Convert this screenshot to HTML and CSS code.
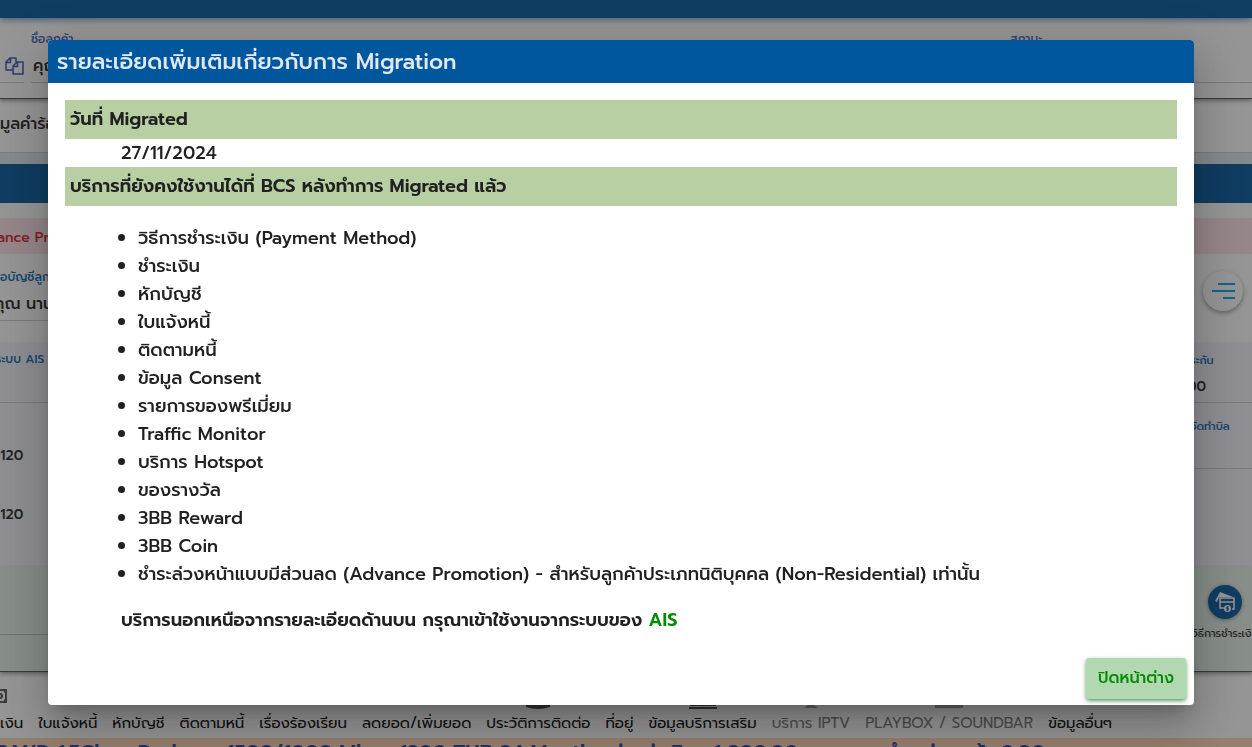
FILE: index.html
```html
<!DOCTYPE html>
<html lang="th">
<head>
<meta charset="utf-8">
<title>รายละเอียดเพิ่มเติมเกี่ยวกับการ Migration</title>
<link rel="stylesheet" href="styles.css">
</head>
<body>
<div class="page">
  <header class="topbar"></header>
  <section class="customer">
    <div class="customer-copy">
      <svg width="19" height="18" viewBox="0 0 19 18" fill="none" stroke="#3f51b5" stroke-width="1.5" stroke-linejoin="round"><path d="M8 13H1V5l4-4h6v4M1 5.500h4.500V1M8 17V9l4-4h6v12zM8 9.500h4.500V5"/></svg>
    </div>
    <div class="customer-name">
      <span class="label violet">ชื่อลูกค้า</span>
      <span class="value">คุณ</span>
    </div>
    <div class="customer-status">
      <span class="label violet">สถานะ</span>
    </div>
  </section>
  <section class="request">มูลคำร้อง</section>
  <div class="section-bar"></div>
  <div class="notice">ance Promotion</div>
  <section class="account">
    <div class="account-name">
      <span class="label">อบัญชีลูกค้า</span>
      <span class="value">คุณ นาน</span>
    </div>
    <button class="round-menu" aria-label="เมนู">
      <svg width="24" height="18" viewBox="0 0 24 18" stroke="#00a3e8" stroke-width="2"><path d="M6 2h17M0 9h23M11 16h12"/></svg>
    </button>
  </section>
  <section class="billing">
    <div class="billing-main">
      <span class="label system">ระบบ AIS</span>
      <span class="amount">1120</span>
      <span class="amount">1120</span>
    </div>
    <div class="billing-side">
      <div class="side-field"><span class="label small">ระกัน</span><span class="amount">00</span></div>
      <div class="side-field"><span class="label small">จัดทำบิล</span></div>
    </div>
  </section>
  <section class="payment">
    <div class="payment-item">
      <span class="payment-icon">
        <svg width="22" height="22" viewBox="0 0 22 22"><path d="M1 10 6 1l13 5H5L3 11z" fill="#fff"/><path d="M11 17H6V7h14v11h-2M6 11h14" fill="none" stroke="#fff" stroke-width="1.5"/><circle cx="13.500" cy="17.500" r="3.500" fill="#fff"/><path d="M15 16h-2.500v1.500h2V19H12M13.500 15.200v4.600" fill="none" stroke="#00579d" stroke-width=".8"/></svg>
      </span>
      <span class="payment-label">วิธีการชำระเงิน</span>
    </div>
  </section>
  <nav class="tabs">
    <a class="tab first" href="#"><svg width="8" height="14" viewBox="0 0 8 14" fill="none" stroke="#555" stroke-width="2"><path d="M0 1h6v12H0M0 5a2 2 0 0 1 0 4M4 1l2 3M4 13l2-3"/></svg>เงิน</a>
    <a class="tab" href="#">ใบแจ้งหนี้</a>
    <a class="tab" href="#">หักบัญชี</a>
    <a class="tab" href="#">ติดตามหนี้</a>
    <a class="tab" href="#">เรื่องร้องเรียน</a>
    <a class="tab" href="#">ลดยอด/เพิ่มยอด</a>
    <a class="tab" href="#"><svg width="24" height="24" viewBox="0 0 24 24" fill="#444"><ellipse cx="12" cy="4" rx="12" ry="4"/><path d="M0 7q12 6 24 0v15q-12 4-24 0z"/></svg>ประวัติการติดต่อ</a>
    <a class="tab" href="#">ที่อยู่</a>
    <a class="tab" href="#"><svg width="28" height="24" viewBox="0 0 28 24" fill="none" stroke="#444" stroke-width="2"><path d="M2 4h24v16H2zM0 23h28M9 15l5 5 5-5"/></svg>ข้อมูลบริการเสริม</a>
    <a class="tab off" href="#"><svg width="14" height="24" viewBox="0 0 14 24" fill="#444"><path d="M4 4h6v16l4 3H0l4-3z"/></svg>บริการ IPTV</a>
    <a class="tab off" href="#"><svg width="28" height="24" viewBox="0 0 28 24" fill="#444"><path d="M0 4h28v19H0z"/></svg>PLAYBOX / SOUNDBAR</a>
    <a class="tab" href="#">ข้อมูลอื่นๆ</a>
  </nav>
  <div class="package">BAND 1.5Gbps Package 1500/1000 Mbps 1200 THB 24 Months ต่อ ค่า Fee 1,800.00 บาท ยอดชำระล่วงหน้า 0.00</div>
</div>

<div class="backdrop">
  <div class="dialog" role="dialog" aria-labelledby="dialog-title">
    <h1 class="dialog-title" id="dialog-title">รายละเอียดเพิ่มเติมเกี่ยวกับการ Migration</h1>
    <div class="dialog-body">
      <h2 class="band">วันที่ Migrated</h2>
      <p class="date">27/11/2024</p>
      <h2 class="band">บริการที่ยังคงใช้งานได้ที่ BCS หลังทำการ Migrated แล้ว</h2>
      <ul class="services">
        <li>วิธีการชำระเงิน (Payment Method)</li>
        <li>ชำระเงิน</li>
        <li>หักบัญชี</li>
        <li>ใบแจ้งหนี้</li>
        <li>ติดตามหนี้</li>
        <li>ข้อมูล Consent</li>
        <li>รายการของพรีเมี่ยม</li>
        <li>Traffic Monitor</li>
        <li>บริการ Hotspot</li>
        <li>ของรางวัล</li>
        <li>3BB Reward</li>
        <li>3BB Coin</li>
        <li>ชำระล่วงหน้าแบบมีส่วนลด (Advance Promotion) - สำหรับลูกค้าประเภทนิติบุคคล (Non-Residential) เท่านั้น</li>
      </ul>
      <p class="remark">บริการนอกเหนือจากรายละเอียดด้านบน กรุณาเข้าใช้งานจากระบบของ <span class="ais">AIS</span></p>
    </div>
    <div class="dialog-actions"><button class="close">ปิดหน้าต่าง</button></div>
  </div>
</div>
</body>
</html>
```
FILE: styles.css
```css
* { box-sizing: border-box; }
body {
  margin: 0;
  height: 100vh;
  overflow: hidden;
  font-family: Prompt, Inter, "Noto Sans Thai", "Noto Sans", sans-serif;
  font-size: 18px;
  font-weight: 500;
  line-height: 28px;
  color: #212121;
}
.page { height: 100vh; overflow: hidden; background: #fff; white-space: nowrap; }
.topbar { height: 18px; background: #00579d; box-shadow: 0 2px 6px #00579d99; position: relative; }
.label { display: block; font-size: 12px; line-height: 20px; color: #0868b0; }
.label.violet { color: #3f5fc0; }
.label.small { font-size: 11px; }
.value { display: block; font-size: 16px; line-height: 24px; }
.customer {
  display: grid;
  grid-template-columns: 24px 1fr 242px;
  column-gap: 7px;
  height: 81px;
  padding: 11px 0 15px;
  border-bottom: 1px solid #555;
  box-shadow: 0 2px 4px #0006;
}
.customer > div { border-bottom: 1px solid #ccc; }
.customer .value { margin-top: 5px; padding-left: 2px; }
.customer-copy { padding: 28px 0 0 5px; }
.customer-copy svg { display: block; }
.request { height: 54px; padding-top: 11px; font-size: 16px; border-bottom: 1px solid #ccc; }
.section-bar { height: 50px; border-top: 11px solid #dfe9f0; background: #00579d; }
.notice { margin-top: 15px; padding: 6px 0 2px; font-size: 14px; text-indent: -3px; background: #ffe3ea; color: #d32030; }
.account { display: flex; height: 88px; }
.account-name { flex: 1; height: 67px; padding-top: 13px; border-bottom: 1px solid #ccc; }
.account .value { margin-top: 5px; text-indent: -6px; }
.round-menu {
  width: 40px;
  height: 40px;
  margin: 17px 9px 0;
  padding: 0;
  border: 0;
  border-radius: 50%;
  background: #fff;
  box-shadow: 0 2px 5px #0006;
}
.round-menu svg { margin: 2px 0 0 1px; }
.billing { display: grid; grid-template-columns: 1fr 62px; height: 225px; background: #f3f1fb; }
.amount { display: block; font-size: 14px; line-height: 26px; }
.billing-main .system { height: 61px; padding-top: 7px; text-indent: -5px; border-bottom: 1px solid #ccc; }
.billing-main .amount { margin: 40px 0 33px -5px; }
.billing-main .amount + .amount { margin-top: 0; }
.side-field { height: 66px; padding-top: 14px; border-bottom: 1px solid #ccc; }
.side-field:first-child { height: 61px; padding-top: 9px; }
.side-field .amount { margin: 3px 0 0 -3px; }
.payment {
  display: flex;
  justify-content: flex-end;
  height: 105px;
  border-bottom: 1px solid #555;
  box-shadow: 0 2px 4px #0006;
  background: linear-gradient(#bbb, #bbb) 0 67px / 100% 1px no-repeat #e4f1e7;
}
.payment-item { display: flex; flex-direction: column; align-items: center; width: 54px; padding-top: 18px; }
.payment-icon { display: grid; place-items: center; width: 34px; height: 34px; border-radius: 50%; background: #00579d; box-shadow: 0 1px 4px #0006; }
.payment-label { font-size: 11px; font-weight: 400; line-height: 30px; }
.tabs { display: flex; gap: 15px; height: 66px; padding-top: 13px; }
.tab { display: flex; flex-direction: column; align-items: center; justify-content: flex-end; height: 52px; font-size: 15px; font-weight: 400; color: #000; text-decoration: none; }
.tab.first { align-items: flex-start; }
.tab.first svg { margin-bottom: 6px; }
.tab.off { color: #777; }
.tab.off svg { opacity: .5; }
.package { background: #ffd5b3; color: #2b3fae; font-size: 20px; font-weight: 600; line-height: 28px; text-indent: -5px; }

.backdrop { position: fixed; inset: 0; display: flex; padding: 40px 58px 42px 48px; background: #2121217a; }
.dialog {
  display: flex;
  flex: 1;
  flex-direction: column;
  overflow: hidden;
  border-radius: 4px;
  background: #fff;
  box-shadow: 0 11px 15px -7px #0003, 0 24px 38px 3px #00000024, 0 9px 46px 8px #0000001f;
}
.dialog-title { margin: 0; padding: 0 9px; font-size: 22px; font-weight: 500; line-height: 43px; background: #00579d; color: #e0e8f2; }
.dialog-body { flex: 1; padding: 17px; }
.band { margin: 0; padding: 0 5px; font-size: 18px; font-weight: 600; line-height: 39px; background: #b7cfa3; }
.date { margin: 0 0 0 56px; }
.services { margin: 18px 0; padding-left: 73px; }
.remark { margin: 0 0 0 56px; font-weight: 600; }
.ais { color: #008a00; }
.dialog-actions { display: flex; justify-content: flex-end; padding: 0 8px 6px; }
.close { padding: 0 12px; border: 0; border-radius: 3px; font: 500 16px/41px Prompt, Inter, "Noto Sans Thai", "Noto Sans", sans-serif; background: #b2d8b2; color: #008a00; box-shadow: 0 2px 4px #0059009c; }
```
